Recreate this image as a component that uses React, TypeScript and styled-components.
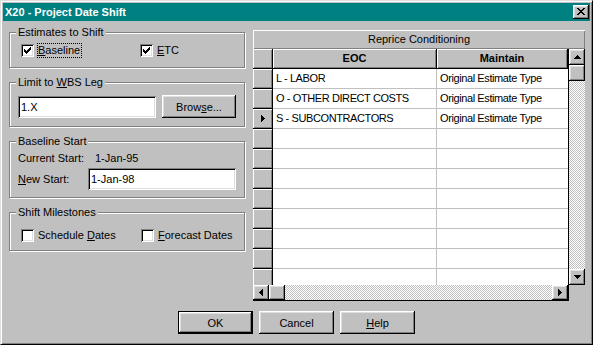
import React from 'react';
import styled, { createGlobalStyle, css } from 'styled-components';

const GlobalStyle = createGlobalStyle`
  html, body {
    margin: 0;
    padding: 0;
    background: #c0c0c0;
  }
  body {
    font-family: "Liberation Sans", Arial, sans-serif;
    font-size: 11px;
    color: #000;
  }
  * {
    box-sizing: border-box;
  }
`;

const raised = css`
  box-shadow: inset -1px -1px 0 #000, inset 1px 1px 0 #fff, inset -2px -2px 0 #808080, inset 2px 2px 0 #dfdfdf;
`;

const sunken = css`
  box-shadow: inset 1px 1px 0 #808080, inset -1px -1px 0 #fff, inset 2px 2px 0 #000, inset -2px -2px 0 #dfdfdf;
`;

const dither = css`
  background-color: #c0c0c0;
  background-image: conic-gradient(#fff 25%, #c0c0c0 0 50%, #fff 0 75%, #c0c0c0 0);
  background-size: 2px 2px;
`;

// pixel glyphs, one string per row
const GLYPHS = {
    check: ['......X', '.....XX', 'X...XXX', 'XX.XXX.', 'XXXXX..', '.XXX...', '..X....'],
    close: ['XX....XX', '.XX..XX.', '..XXXX..', '...XX...', '..XXXX..', '.XX..XX.', 'XX....XX'],
    up: ['...X...', '..XXX..', '.XXXXX.', 'XXXXXXX'],
    down: ['XXXXXXX', '.XXXXX.', '..XXX..', '...X...'],
    left: ['...X', '..XX', '.XXX', 'XXXX', '.XXX', '..XX', '...X'],
    right: ['X...', 'XX..', 'XXX.', 'XXXX', 'XXX.', 'XX..', 'X...'],
};

type GlyphName = keyof typeof GLYPHS;

const pixelPath = (rows: string[]) =>
    rows
        .map((r, y) => {
            let d = '';
            let x = 0;
            while (x < r.length) {
                if (r[x] === 'X') {
                    const s = x;
                    while (r[x] === 'X') x++;
                    d += `M${s} ${y}h${x - s}v1h${s - x}z`;
                } else x++;
            }
            return d;
        })
        .join('');

const Glyph = ({ name }: { name: GlyphName }) => {
    const rows = GLYPHS[name];
    return (
        <svg width={rows[0].length} height={rows.length} shapeRendering="crispEdges" style={{ display: 'block' }}>
            <path d={pixelPath(rows)} fill="#000" />
        </svg>
    );
};

const Window = styled.div`
    width: 593px;
    height: 345px;
    background: #c0c0c0;
    border: 1px solid;
    border-color: #dfdfdf #000 #000 #dfdfdf;
    box-shadow: inset 1px 1px 0 #fff, inset -1px -1px 0 #808080;
    padding: 2px;
    display: flex;
    flex-direction: column;
`;

const TitleBar = styled.div`
    height: 18px;
    background: #008080;
    color: #fff;
    font-weight: bold;
    font-size: 11px;
    display: flex;
    align-items: center;
    justify-content: space-between;
    padding: 0 1px 0 2px;
`;

const CloseButton = styled.div`
    width: 16px;
    height: 14px;
    background: #c0c0c0;
    ${raised};
    display: flex;
    align-items: center;
    justify-content: center;
    padding: 0 1px 1px 0;
`;

const Client = styled.div`
    flex: 1;
    padding: 5px 6px 0 6px;
    display: flex;
    flex-direction: column;
`;

const Main = styled.div`
    display: flex;
    align-items: flex-start;
    gap: 8px;
`;

const LeftCol = styled.div`
    width: 236px;
    display: flex;
    flex-direction: column;
    gap: 8px;
`;

const Group = styled.fieldset<{ $h: number }>`
    margin: 0;
    padding: 0 8px;
    min-inline-size: 0;
    height: ${(p) => p.$h}px;
    border: 1px solid #808080;
    box-shadow: inset 1px 1px 0 #fff, 1px 1px 0 #fff;
`;

const Legend = styled.legend`
    padding: 0 2px;
    margin-left: -2px;
    line-height: 13px;
    background: #c0c0c0;
`;

const GroupBody = styled.div<{ $pt: number }>`
    padding-top: ${(p) => p.$pt}px;
    display: flex;
    flex-direction: column;
    gap: 3px;
`;

const CheckRow = styled.div<{ $col: number }>`
    display: grid;
    grid-template-columns: ${(p) => p.$col}px auto;
    margin-left: 3px;
    height: 15px;
    align-items: center;
`;

const CheckItem = styled.div`
    display: flex;
    align-items: center;
    gap: 3px;
`;

const CheckBox = styled.div`
    width: 13px;
    height: 13px;
    background: #fff;
    ${sunken};
    padding: 3px;
`;

const CheckLabel = styled.span<{ $focus?: boolean }>`
    line-height: 13px;
    border: 1px dotted ${(p) => (p.$focus ? '#000' : 'transparent')};
    padding-right: 1px;
    white-space: nowrap;
`;

const InputRow = styled.div`
    display: flex;
    align-items: flex-end;
    gap: 6px;
`;

const TextBox = styled.input<{ $w: number }>`
    width: ${(p) => p.$w}px;
    height: 22px;
    border: none;
    outline: none;
    margin: 0;
    padding: 0 2px 0 3px;
    font: inherit;
    color: #000;
    background: #fff;
    ${sunken};
`;

const Button = styled.div<{ $default?: boolean }>`
    width: 75px;
    height: 23px;
    background: #c0c0c0;
    display: flex;
    align-items: center;
    justify-content: center;
    white-space: nowrap;
    ${raised};
    border: ${(p) => (p.$default ? '1px solid #000' : 'none')};
`;

const FieldRow = styled.div<{ $label: number; $h: number }>`
    display: grid;
    grid-template-columns: ${(p) => p.$label}px auto;
    align-items: center;
    height: ${(p) => p.$h}px;
    line-height: 13px;
    white-space: nowrap;
`;

const Grid = styled.div`
    width: 332px;
    margin-top: 4px;
    display: grid;
    grid-template-columns: 316px 16px;
    grid-template-rows: 19px 236px 16px;
`;

const Caption = styled.div`
    grid-column: 1 / span 2;
    line-height: 19px;
    text-align: center;
    box-shadow: inset 1px 1px 0 #fff, inset -1px -1px 0 #808080;
`;

const Table = styled.div`
    display: grid;
    grid-template-columns: 20px 164px 131px;
    grid-auto-rows: 20px;
    border-right: 1px solid #000;
    overflow: hidden;
    font-family: "Liberation Sans", Arial, sans-serif;
    font-size: 11px;
    letter-spacing: -0.4px;
`;

const HeadCell = styled.div`
    background: #c0c0c0;
    border-right: 1px solid #000;
    border-bottom: 1px solid #000;
    box-shadow: inset 1px 1px 0 #fff, inset -1px -1px 0 #808080;
    font-weight: bold;
    letter-spacing: 0;
    text-align: center;
    line-height: 19px;
`;

const RowHead = styled.div`
    background: #c0c0c0;
    border-right: 1px solid #000;
    border-bottom: 1px solid #000;
    box-shadow: inset 1px 1px 0 #fff, inset -1px -1px 0 #808080;
    display: flex;
    align-items: center;
    padding-left: 8px;
`;

const Cell = styled.div<{ $last?: boolean }>`
    background: #fff;
    border-right: ${(p) => (p.$last ? 'none' : '1px solid #c0c0c0')};
    border-bottom: 1px solid #c0c0c0;
    padding-left: 3px;
    line-height: 19px;
    white-space: nowrap;
    overflow: hidden;
`;

const ScrollBar = styled.div<{ $dir: 'v' | 'h' }>`
    display: flex;
    flex-direction: ${(p) => (p.$dir === 'v' ? 'column' : 'row')};
    ${(p) => p.$dir === 'h' && 'border-right: 1px solid #000; border-bottom: 1px solid #000;'}
`;

const ScrollButton = styled.div<{ $dir: 'v' | 'h' }>`
    flex: 0 0 auto;
    width: 16px;
    height: ${(p) => (p.$dir === 'v' ? '16px' : '15px')};
    background: #c0c0c0;
    ${raised};
    display: flex;
    align-items: center;
    justify-content: center;
`;

const Track = styled.div`
    flex: 1;
    ${dither};
`;

const ButtonRow = styled.div`
    margin-top: 10px;
    display: flex;
    justify-content: center;
    gap: 6px;
`;

const rows = [
    { eoc: 'L - LABOR', maintain: 'Original Estimate Type' },
    { eoc: 'O - OTHER DIRECT COSTS', maintain: 'Original Estimate Type' },
    { eoc: 'S - SUBCONTRACTORS', maintain: 'Original Estimate Type', current: true },
    ...Array.from({ length: 8 }, () => ({ eoc: '', maintain: '' })),
];

const Check = ({ checked, focus, children }: { checked?: boolean; focus?: boolean; children: React.ReactNode }) => (
    <CheckItem>
        <CheckBox>{checked && <Glyph name="check" />}</CheckBox>
        <CheckLabel $focus={focus}>{children}</CheckLabel>
    </CheckItem>
);

const App = () => {
    return (
        <>
            <GlobalStyle />
            <Window>
                <TitleBar>
                    <span>X20 - Project Date Shift</span>
                    <CloseButton>
                        <Glyph name="close" />
                    </CloseButton>
                </TitleBar>
                <Client>
                    <Main>
                        <LeftCol>
                            <Group $h={42}>
                                <Legend>Estimates to Shift</Legend>
                                <GroupBody $pt={4}>
                                    <CheckRow $col={119}>
                                        <Check checked focus>
                                            <u>B</u>aseline
                                        </Check>
                                        <Check checked>
                                            <u>E</u>TC
                                        </Check>
                                    </CheckRow>
                                </GroupBody>
                            </Group>

                            <Group $h={51}>
                                <Legend>
                                    Limit to <u>W</u>BS Leg
                                </Legend>
                                <GroupBody $pt={6}>
                                    <InputRow>
                                        <TextBox $w={138} defaultValue="1.X" />
                                        <Button>
                                            Brow<u>s</u>e...
                                        </Button>
                                    </InputRow>
                                </GroupBody>
                            </Group>

                            <Group $h={63}>
                                <Legend>Baseline Start</Legend>
                                <GroupBody $pt={4}>
                                    <FieldRow $label={77} $h={13}>
                                        <span>Current Start:</span>
                                        <span>1-Jan-95</span>
                                    </FieldRow>
                                    <FieldRow $label={70} $h={22}>
                                        <span>
                                            <u>N</u>ew Start:
                                        </span>
                                        <TextBox $w={148} defaultValue="1-Jan-98" />
                                    </FieldRow>
                                </GroupBody>
                            </Group>

                            <Group $h={45}>
                                <Legend>Shift Milestones</Legend>
                                <GroupBody $pt={9}>
                                    <CheckRow $col={120}>
                                        <Check>
                                            Schedule <u>D</u>ates
                                        </Check>
                                        <Check>
                                            <u>F</u>orecast Dates
                                        </Check>
                                    </CheckRow>
                                </GroupBody>
                            </Group>
                        </LeftCol>

                        <Grid>
                            <Caption>Reprice Conditioning</Caption>
                            <Table>
                                <HeadCell />
                                <HeadCell>EOC</HeadCell>
                                <HeadCell>Maintain</HeadCell>
                                {rows.map((r, i) => (
                                    <React.Fragment key={i}>
                                        <RowHead>{r.current && <Glyph name="right" />}</RowHead>
                                        <Cell>{r.eoc}</Cell>
                                        <Cell $last>{r.maintain}</Cell>
                                    </React.Fragment>
                                ))}
                            </Table>
                            <ScrollBar $dir="v">
                                <ScrollButton $dir="v">
                                    <Glyph name="up" />
                                </ScrollButton>
                                <ScrollButton $dir="v" />
                                <Track />
                                <ScrollButton $dir="v">
                                    <Glyph name="down" />
                                </ScrollButton>
                            </ScrollBar>
                            <ScrollBar $dir="h">
                                <ScrollButton $dir="h">
                                    <Glyph name="left" />
                                </ScrollButton>
                                <ScrollButton $dir="h" />
                                <Track />
                                <ScrollButton $dir="h">
                                    <Glyph name="right" />
                                </ScrollButton>
                            </ScrollBar>
                        </Grid>
                    </Main>

                    <ButtonRow>
                        <Button $default>OK</Button>
                        <Button>Cancel</Button>
                        <Button>
                            <u>H</u>elp
                        </Button>
                    </ButtonRow>
                </Client>
            </Window>
        </>
    );
};

export default App;
